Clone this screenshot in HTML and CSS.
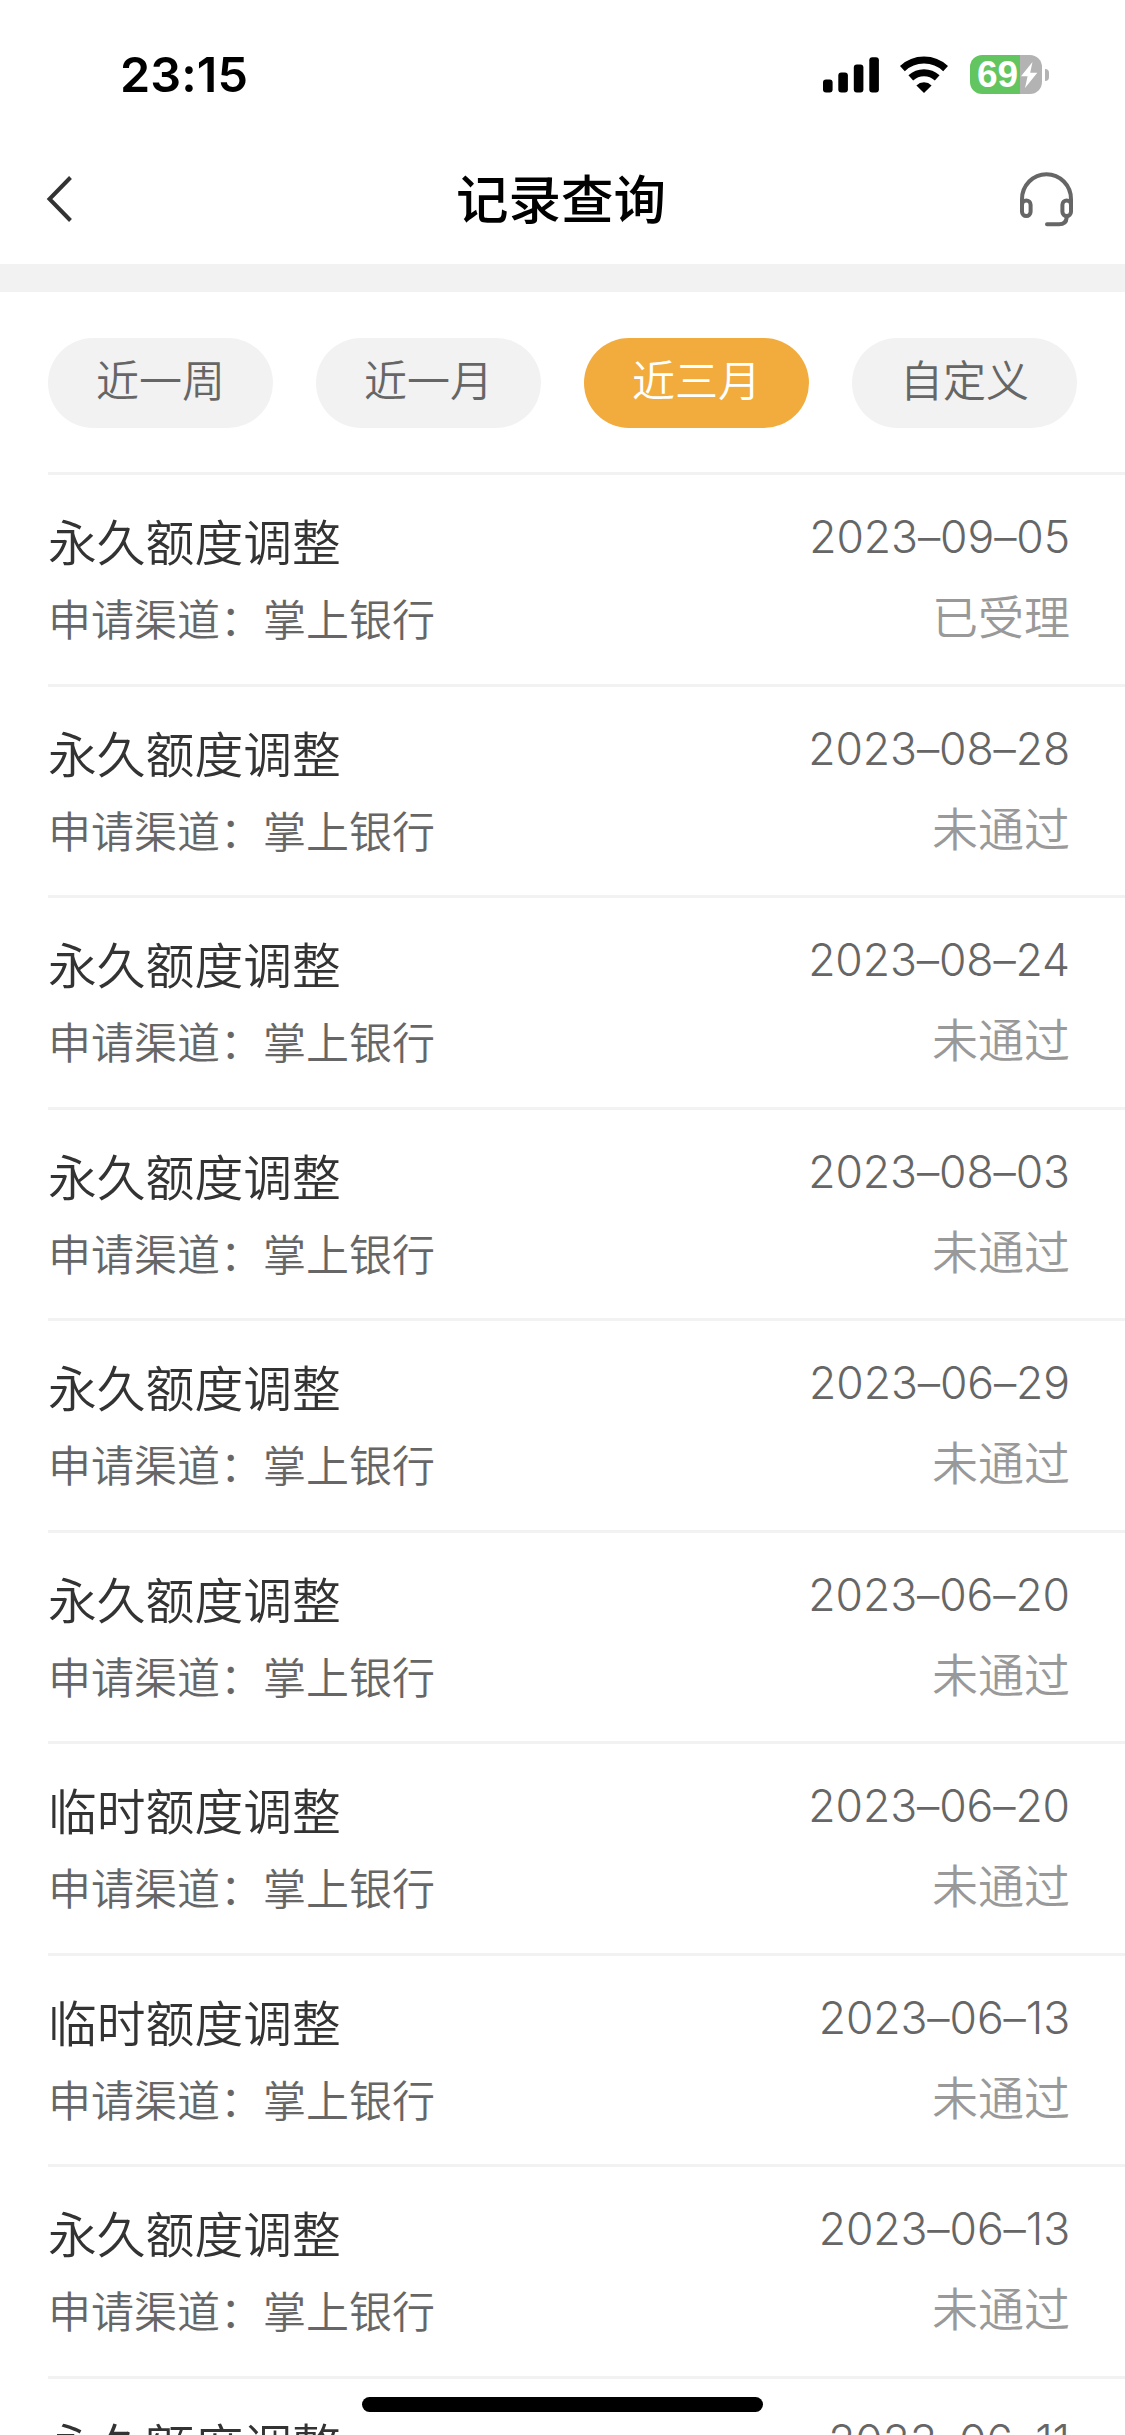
FILE: index.html
```html
<!DOCTYPE html>
<html lang="zh-CN">
<head>
    <meta charset="UTF-8">
    <meta name="viewport" content="width=device-width, initial-scale=1.0">
    <title>记录查询</title>
    <link rel="stylesheet" href="styles.css">
</head>
<body>
    <div class="app">
        <!-- 状态栏 -->
        <div class="status-bar">
            <span class="time">23:15</span>
            <div class="status-icons">
                <svg class="signal" width="56" height="36" viewBox="0 0 56 36">
                    <rect x="0" y="22.5" width="9.6" height="13" rx="3"/>
                    <rect x="15.3" y="15.5" width="9.6" height="20" rx="3"/>
                    <rect x="30.8" y="7.5" width="9.6" height="28" rx="3"/>
                    <rect x="46.3" y="0.3" width="9.6" height="35.2" rx="3"/>
                </svg>
                <svg class="wifi" width="50" height="38" viewBox="0 0 50 38">
                    <path d="M3.4 12.6A31.5 31.5 0 0 1 46.6 12.6" fill="none" stroke="#000" stroke-width="7"/>
                    <path d="M11.8 21.8A19.5 19.5 0 0 1 38.2 21.8" fill="none" stroke="#000" stroke-width="7"/>
                    <path d="M17.4 29.4A11 11 0 0 1 32.6 29.4L25 37Z"/>
                </svg>
                <div class="battery">
                    <div class="battery-body">
                        <span class="battery-text">69</span>
                        <svg class="bolt" width="18" height="28" viewBox="0 0 18 28">
                            <path d="M12.5 1L1 15.2H7.6L5 27L17.3 11.8H10.2Z" fill="#fff"/>
                        </svg>
                    </div>
                    <div class="battery-cap"></div>
                </div>
            </div>
        </div>

        <!-- 导航栏 -->
        <div class="nav-bar">
            <svg class="back" width="28" height="48" viewBox="0 0 28 48">
                <path d="M24.5 2.5L3.5 24L24.5 45.5" fill="none" stroke="#333" stroke-width="4"/>
            </svg>
            <h1>记录查询</h1>
            <svg class="service" width="56" height="56" viewBox="0 0 56 56" fill="none" stroke="#666" stroke-width="4" stroke-linecap="round" stroke-linejoin="round">
                <path d="M3 34V28.2A24.5 25 0 0 1 52 28.2V34"/>
                <rect x="3" y="29.5" width="8.6" height="15.5" rx="4.3"/>
                <rect x="43.4" y="29.5" width="8.6" height="15.5" rx="4.3"/>
                <path d="M47.7 45V46.5Q47.2 53.3 40 53.3H28"/>
            </svg>
        </div>

        <!-- 时间筛选 -->
        <div class="tabs">
            <div class="tab">近一周</div>
            <div class="tab">近一月</div>
            <div class="tab active">近三月</div>
            <div class="tab">自定义</div>
        </div>

        <!-- 记录列表 -->
        <div class="list">
            <div class="item">
                <div class="info"><div class="name">永久额度调整</div><div class="channel">申请渠道：掌上银行</div></div>
                <div class="result"><div class="date">2023–09–05</div><div class="state">已受理</div></div>
            </div>
            <div class="item">
                <div class="info"><div class="name">永久额度调整</div><div class="channel">申请渠道：掌上银行</div></div>
                <div class="result"><div class="date">2023–08–28</div><div class="state">未通过</div></div>
            </div>
            <div class="item">
                <div class="info"><div class="name">永久额度调整</div><div class="channel">申请渠道：掌上银行</div></div>
                <div class="result"><div class="date">2023–08–24</div><div class="state">未通过</div></div>
            </div>
            <div class="item">
                <div class="info"><div class="name">永久额度调整</div><div class="channel">申请渠道：掌上银行</div></div>
                <div class="result"><div class="date">2023–08–03</div><div class="state">未通过</div></div>
            </div>
            <div class="item">
                <div class="info"><div class="name">永久额度调整</div><div class="channel">申请渠道：掌上银行</div></div>
                <div class="result"><div class="date">2023–06–29</div><div class="state">未通过</div></div>
            </div>
            <div class="item">
                <div class="info"><div class="name">永久额度调整</div><div class="channel">申请渠道：掌上银行</div></div>
                <div class="result"><div class="date">2023–06–20</div><div class="state">未通过</div></div>
            </div>
            <div class="item">
                <div class="info"><div class="name">临时额度调整</div><div class="channel">申请渠道：掌上银行</div></div>
                <div class="result"><div class="date">2023–06–20</div><div class="state">未通过</div></div>
            </div>
            <div class="item">
                <div class="info"><div class="name">临时额度调整</div><div class="channel">申请渠道：掌上银行</div></div>
                <div class="result"><div class="date">2023–06–13</div><div class="state">未通过</div></div>
            </div>
            <div class="item">
                <div class="info"><div class="name">永久额度调整</div><div class="channel">申请渠道：掌上银行</div></div>
                <div class="result"><div class="date">2023–06–13</div><div class="state">未通过</div></div>
            </div>
            <div class="item">
                <div class="info"><div class="name">永久额度调整</div></div>
                <div class="result"><div class="date">2023–06–11</div></div>
            </div>
        </div>

        <div class="home-indicator"></div>
    </div>
</body>
</html>
```
FILE: styles.css
```css
* {
    margin: 0;
    padding: 0;
    box-sizing: border-box;
}

body {
    background: #fff;
    font-family: "Noto Sans CJK SC", sans-serif;
}

.app {
    position: relative;
    width: 1125px;
    height: 2435px;
    overflow: hidden;
    background: #fff;
}

.status-bar {
    display: flex;
    justify-content: space-between;
    height: 133px;
    padding: 45px 76px 0 120px;
}

.time {
    font-family: Inter, sans-serif;
    font-size: 48.5px;
    font-weight: 600;
    line-height: 60px;
    letter-spacing: 0.1px;
}

.status-icons {
    display: flex;
    align-items: flex-start;
    padding-top: 10px;
}

.signal {
    margin: 2px 20px 0 0;
}

.wifi {
    margin: 1px 21px 0 0;
}

.battery {
    display: flex;
    align-items: center;
    gap: 3px;
}

.battery-body {
    display: flex;
    align-items: center;
    width: 72px;
    height: 39px;
    padding-left: 7px;
    border-radius: 12px;
    background: linear-gradient(to right, #62c55f 50px, #b3b3b3 50px);
}

.battery-text {
    width: 43px;
    color: #fff;
    font-family: "Liberation Sans", Arial, sans-serif;
    font-size: 37px;
    font-weight: 700;
    line-height: 39px;
}

.bolt {
    flex-shrink: 0;
}

.battery-cap {
    width: 4px;
    height: 12px;
    border-radius: 0 4px 4px 0;
    background: #b3b3b3;
}

.nav-bar {
    display: flex;
    justify-content: space-between;
    align-items: center;
    height: 159px;
    padding: 0 50px 0 46px;
    border-bottom: 28px solid #f2f2f2;
}

.nav-bar h1 {
    padding: 0 0 5px 29px;
    font-size: 52.5px;
    font-weight: 500;
    line-height: 76px;
    color: #000;
}

.tabs {
    display: flex;
    justify-content: space-between;
    height: 180px;
    padding: 45.5px 48px 0;
}

.tab {
    width: 225px;
    height: 90px;
    border-radius: 45px;
    background: #f2f2f2;
    color: #666;
    font-size: 43px;
    font-weight: 350;
    line-height: 80px;
    text-align: center;
}

.tab.active {
    background: #f1ac3d;
    color: #fff;
}

.list {
    padding-left: 48px;
}

.item {
    display: flex;
    justify-content: space-between;
    height: 211.55px;
    padding: 24px 55px 0 0;
    border-top: 3px solid #f2f2f2;
}

.name {
    color: #333;
    font-size: 48.8px;
    font-weight: 350;
    line-height: 81px;
}

.channel {
    color: #666;
    font-size: 43px;
    font-weight: 350;
    line-height: 74px;
}

.result {
    text-align: right;
}

.date {
    color: #666;
    font-family: Inter, sans-serif;
    font-size: 44.5px;
    font-weight: 300;
    line-height: 76px;
    letter-spacing: -0.1px;
}

.state {
    color: #999;
    font-size: 46px;
    font-weight: 350;
    line-height: 79px;
}

.home-indicator {
    position: absolute;
    left: 362px;
    bottom: 23px;
    width: 401px;
    height: 15px;
    border-radius: 8px;
    background: #000;
}
```
